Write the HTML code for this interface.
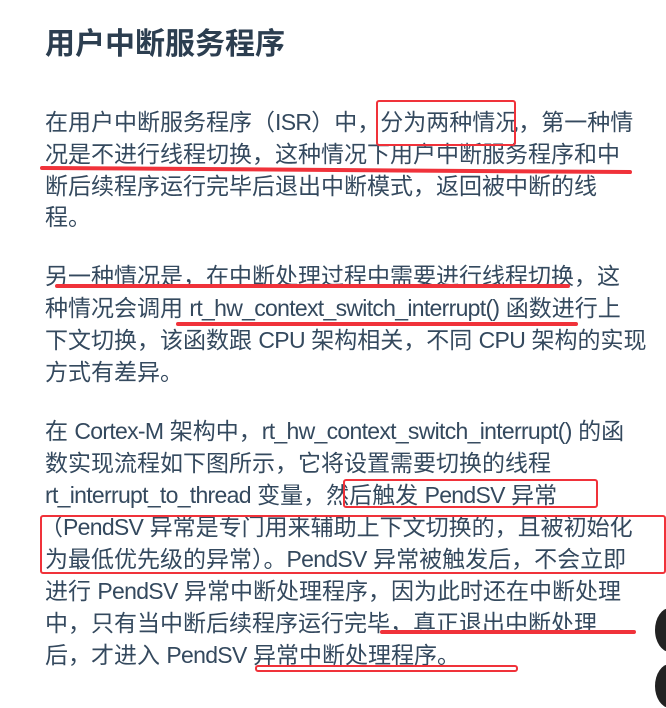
<!DOCTYPE html>
<html><head><meta charset="utf-8"><style>
body{margin:0;width:666px;height:696px;background:#fff;overflow:hidden;position:relative;font-family:"Liberation Sans","Noto Sans CJK SC",sans-serif;color:#34495e}
.l{position:absolute;left:45px;font-size:23px;line-height:32px;white-space:nowrap}
.e{letter-spacing:-0.7px}
h1{position:absolute;left:45px;top:25px;margin:0;font-size:30px;line-height:40px;font-weight:bold;color:#2c3e50;font-family:"Liberation Sans","Noto Sans CJK SC",sans-serif}
.r{position:absolute;border:2.5px solid #f0323a;border-radius:3px;box-sizing:border-box}
.u{position:absolute;height:4px;background:#f0323a;border-radius:2px}
</style></head><body>
<h1>用户中断服务程序</h1>
<div class="l" style="top:106px">在用户中断服务程序（<span class="e">ISR</span>）中，分为两种情况，第一种情</div>
<div class="l" style="top:138px">况是不进行线程切换，这种情况下用户中断服务程序和中</div>
<div class="l" style="top:170px">断后续程序运行完毕后退出中断模式，返回被中断的线</div>
<div class="l" style="top:201px">程。</div>
<div class="l" style="top:260px">另一种情况是，在中断处理过程中需要进行线程切换，这</div>
<div class="l" style="top:292px">种情况会调用 <span class="e">rt_hw_context_switch_interrupt()</span> 函数进行上</div>
<div class="l" style="top:324px">下文切换，该函数跟 <span class="e">CPU</span> 架构相关，不同 <span class="e">CPU</span> 架构的实现</div>
<div class="l" style="top:356px">方式有差异。</div>
<div class="l" style="top:415px">在 <span class="e">Cortex-M</span> 架构中，<span class="e">rt_hw_context_switch_interrupt()</span> 的函</div>
<div class="l" style="top:447px">数实现流程如下图所示，它将设置需要切换的线程</div>
<div class="l" style="top:479px"><span class="e">rt_interrupt_to_thread</span> 变量，然后触发 <span class="e">PendSV</span> 异常</div>
<div class="l" style="top:511px;left:40px">（<span class="e">PendSV</span> 异常是专门用来辅助上下文切换的，且被初始化</div>
<div class="l" style="top:543px">为最低优先级的异常）。<span class="e">PendSV</span> 异常被触发后，不会立即</div>
<div class="l" style="top:575px">进行 <span class="e">PendSV</span> 异常中断处理程序，因为此时还在中断处理</div>
<div class="l" style="top:607px">中，只有当中断后续程序运行完毕，真正退出中断处理</div>
<div class="l" style="top:639px">后，才进入 <span class="e">PendSV</span> 异常中断处理程序。</div>
<div class="r" style="left:376px;top:100px;width:140px;height:46px"></div>
<div class="u" style="left:40px;top:168px;width:592px;transform:rotate(0.4deg)"></div>
<div class="u" style="left:55px;top:284px;width:515px"></div>
<div class="u" style="left:176px;top:322px;width:402px"></div>
<div class="r" style="left:343px;top:479px;width:255px;height:29px"></div>
<div class="r" style="left:40px;top:515px;width:626px;height:59px"></div>
<div class="u" style="left:380px;top:630px;width:256px"></div>
<div class="r" style="left:255px;top:665px;width:263px;height:7px;border-width:2px"></div>
<div style="position:absolute;left:655px;top:608px;width:30px;height:44px;border-radius:50%;background:#222"></div>
<div style="position:absolute;left:655px;top:664px;width:30px;height:44px;border-radius:50%;background:#222"></div>
</body></html>
